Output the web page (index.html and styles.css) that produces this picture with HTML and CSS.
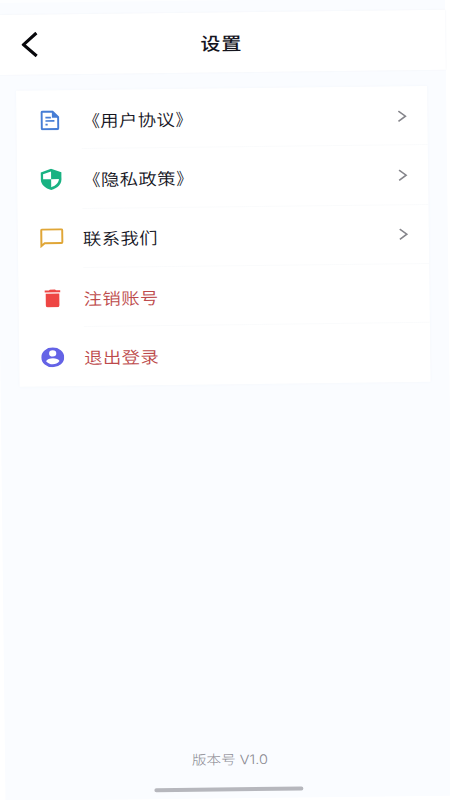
FILE: index.html
```html
<!DOCTYPE html>
<html lang="zh-CN">
<head>
<meta charset="utf-8">
<title>设置</title>
<link rel="stylesheet" href="styles.css">
</head>
<body>
<div class="screen">
  <div class="status"></div>
  <header class="header">
    <svg class="back" width="17" height="26" viewBox="0 0 17 26"><path d="M15 1.5 2 13 15 24.5" fill="none" stroke="#08080c" stroke-width="3.1"/></svg>
    <h1 class="title"><span class="label">设置</span></h1>
  </header>
  <main class="card">
    <div class="row">
      <span class="icon"><svg width="19" height="20" viewBox="0 0 19 20"><path d="M2 1.2H12L17.8 7V17.8Q17.8 18.8 16.8 18.8H2.2Q1.2 18.8 1.2 17.8V2.2Q1.2 1.2 2.2 1.2Z" fill="none" stroke="#467dd5" stroke-width="2.1"/><path d="M11.5 1V7.5H18Z" fill="#467dd5"/><path d="M5 7.2H10.5M5 10.6H14M5 14.2H7.2" stroke="#467dd5" stroke-width="1.7"/></svg></span>
      <span class="label"><span class="open">《</span>用户协议<span class="close">》</span></span>
      <svg class="chevron" width="10" height="12" viewBox="0 0 10 12"><path d="M1 .8 8 6 1 11.2" fill="none" stroke="#85858b" stroke-width="1.6"/></svg>
    </div>
    <div class="row">
      <span class="icon"><svg width="22" height="22" viewBox="0 0 22 22"><path d="M11 .5 21.3 4V11C21.3 16.2 17 20 11 21.6C5 20 .7 16.2 .7 11V4Z" fill="#19b282"/><path d="M11 3.2V10.8H3V5.8ZM11 10.8H18.8C18.5 14.8 15.3 17.6 11 18.9Z" fill="#fff"/></svg></span>
      <span class="label"><span class="open">《</span>隐私政策<span class="close">》</span></span>
      <svg class="chevron" width="10" height="12" viewBox="0 0 10 12"><path d="M1 .8 8 6 1 11.2" fill="none" stroke="#85858b" stroke-width="1.6"/></svg>
    </div>
    <div class="row">
      <span class="icon"><svg width="24" height="20" viewBox="0 0 24 20"><path d="M1.5 17.6V2Q1.5 1 2.5 1H21.5Q22.5 1 22.5 2V13.8Q22.5 14.8 21.5 14.8H4.8Z" fill="none" stroke="#e0a637" stroke-width="2"/></svg></span>
      <span class="label">联系我们</span>
      <svg class="chevron" width="10" height="12" viewBox="0 0 10 12"><path d="M1 .8 8 6 1 11.2" fill="none" stroke="#85858b" stroke-width="1.6"/></svg>
    </div>
    <div class="row danger">
      <span class="icon"><svg width="16" height="18" viewBox="0 0 16 18"><path d="M0 1H4.5L5.5 0H10.5L11.5 1H16V3H0ZM1.2 4.2H14.8V16Q14.8 18 12.8 18H3.2Q1.2 18 1.2 16Z" fill="#ee4644"/></svg></span>
      <span class="label">注销账号</span>
    </div>
    <div class="row danger">
      <span class="icon"><svg width="23" height="20" viewBox="0 0 23 20"><ellipse cx="11.5" cy="10" rx="11.5" ry="10" fill="#6463e6"/><ellipse cx="11.5" cy="6" rx="3.6" ry="3.2" fill="#fff"/><path d="M4.8 13.8C6.4 9.9 16.6 9.9 18.2 13.8C15 18 8 18 4.8 13.8Z" fill="#fff"/></svg></span>
      <span class="label">退出登录</span>
    </div>
  </main>
  <footer class="footer">
    <span class="version">版本号 V1.0</span>
    <div class="homebar"></div>
  </footer>
</div>
</body>
</html>
```
FILE: styles.css
```css
* { box-sizing: border-box; }
html, body { margin: 0; height: 100%; overflow: hidden; background: #fff; }
body { font-family: "Noto Sans CJK SC", sans-serif; color: #15151e; }

.screen {
  display: flex;
  flex-direction: column;
  width: 449px;
  height: 801px;
  margin-left: -4px;
  background: #fafcff;
  transform: rotate(-0.68deg);
  transform-origin: 0 0;
}
.status { height: 14.5px; border-top: 3px solid #fdfeff; }
.header {
  display: grid;
  grid-template-columns: 60px 1fr 60px;
  align-items: center;
  height: 60px;
  background: #fff;
  box-shadow: 0 0 2px #f0f2f6;
}
.back { margin-left: 25px; }
.title { margin: 1px 0 0; text-align: center; font-size: 18px; font-weight: 500; line-height: 24px; }
.title .label { letter-spacing: 0.8px; transform-origin: center; }
.card {
  width: 411.5px;
  margin: 16.5px 0 0 18.5px;
  background: #fff;
  box-shadow: 0 0 3px #f3f6fa;
}
.row {
  display: grid;
  grid-template-columns: 65.5px 1fr 38px;
  align-items: center;
  height: 59.3px;
  font-size: 16.5px;
  font-weight: 350;
  background: linear-gradient(#fafbfc, #fafbfc) 65px 100% / 100% 1px no-repeat;
}
.row:last-child { background: none; }
.icon { display: flex; justify-content: center; width: 68px; }
.label {
  display: inline-block;
  justify-self: start;
  line-height: 24px;
  letter-spacing: 0.4px;
  white-space: nowrap;
  transform: scaleX(1.11);
  transform-origin: 0 50%;
}
.open, .close { display: inline-block; }
.open { transform: scaleX(0.9); transform-origin: 100% 50%; }
.close { transform: scaleX(0.84); transform-origin: 0 50%; }
.chevron { margin-left: 8px; }
.danger { color: #bd4a4b; }
.footer {
  display: flex;
  flex-direction: column;
  align-items: center;
  margin-top: auto;
  padding: 0 2px 7px 0;
}
.version {
  margin: 0 0 18.5px 2px;
  font-family: Inter, "Noto Sans CJK SC", sans-serif;
  font-size: 13px;
  font-weight: 300;
  line-height: 20px;
  color: #88888f;
  transform: scaleX(1.12);
}
.homebar { width: 149px; height: 4px; border-radius: 2px; background: #b6b7bd; }
```
